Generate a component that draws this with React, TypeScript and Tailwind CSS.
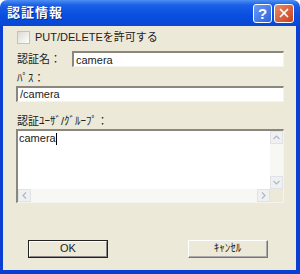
import { X } from "lucide-react"

const font = { fontFamily: '"Liberation Sans", "Noto Sans CJK JP", sans-serif' }

function Sunken({ className, children }: { className?: string; children?: React.ReactNode }) {
  return (
    <div className={`border-t-2 border-l-2 border-t-[#8a887e] border-l-[#8a887e] border-r border-b border-r-[#f4f3ee] border-b-[#f4f3ee] bg-white ${className ?? ""}`}>
      {children}
    </div>
  )
}

function ScrollBtn({ dir }: { dir: "up" | "down" | "left" | "right" }) {
  const rot = { up: "rotate(0)", down: "rotate(180deg)", left: "rotate(-90deg)", right: "rotate(90deg)" }[dir]
  return (
    <div className="w-[13px] h-[13px] bg-[#eef0f2] border border-[#dfe3e8] flex items-center justify-center">
      <svg width="7" height="5" viewBox="0 0 7 5" style={{ transform: rot }}>
        <path d="M0.5 4 L3.5 1 L6.5 4" stroke="#b3b8c2" strokeWidth="1.2" fill="none" />
      </svg>
    </div>
  )
}

function Btn({ label, def }: { label: string; def?: boolean }) {
  return (
    <div
      className={`w-[80px] h-[18px] flex items-center justify-center text-[11px] text-[#222] bg-[#ece9d8] border ${
        def ? "border-[#222]" : "border-t-white border-l-white border-r-[#777] border-b-[#777]"
      }`}
    >
      <div className={`w-full h-full flex items-center justify-center ${def ? "border border-t-white border-l-white border-r-[#888] border-b-[#888]" : "border-r border-b border-r-[#aaa] border-b-[#aaa]"}`}>
        {label}
      </div>
    </div>
  )
}

export default function App() {
  return (
    <div className="w-[300px] h-[274px] flex flex-col bg-white" style={font}>
      {/* title bar */}
      <div className="h-[26px] rounded-t-[7px] bg-[linear-gradient(#4d8ef4_0%,#1a5fe6_20%,#0a4ee0_60%,#0747d2_100%)] flex items-center pl-[7px] pr-[6px]">
        <span className="text-white font-bold text-[13px] tracking-[1px] [text-shadow:1px_1px_0_#0a2a8a]">認証情報</span>
        <div className="ml-auto flex gap-[2px]">
          <div className="w-[19px] h-[19px] rounded-[3px] border border-white bg-[linear-gradient(135deg,#6c9cf5,#2a63e0)] flex items-center justify-center text-white font-bold text-[15px] leading-none">
            ?
          </div>
          <div className="w-[20px] h-[19px] rounded-[3px] border border-white bg-[linear-gradient(135deg,#e98a6a,#c8401c)] flex items-center justify-center">
            <X size={14} color="white" strokeWidth={3} />
          </div>
        </div>
      </div>
      {/* body */}
      <div className="flex-1 bg-[#ece9d8] border-l-[3px] border-r-[4px] border-b-[4px] border-[#0b3fd3] flex flex-col pl-[13px] pr-[12px] text-[11px] text-[#222]">
        <div className="flex items-center gap-[5px] mt-[5px] ml-[1px] h-[13px]">
          <div className="w-[13px] h-[13px] border border-[#c5c3b8] bg-[linear-gradient(135deg,#dcdad0,#ffffff)]" />
          <span>PUT/DELETEを許可する</span>
        </div>
        <div className="flex items-center mt-[7px]">
          <span className="w-[56px] pl-[1px]">認証名：</span>
          <Sunken className="flex-1 h-[16px] flex items-center pl-[2px]">camera</Sunken>
        </div>
        <div className="mt-[2px] ml-[1px] leading-[16px]">ﾊﾟｽ：</div>
        <Sunken className="h-[16px] flex items-center pl-[2px]">/camera</Sunken>
        <div className="mt-[11px] ml-[1px] leading-[16px]">認証ﾕｰｻﾞ/ｸﾞﾙｰﾌﾟ：</div>
        <Sunken className="h-[74px] flex">
          <div className="flex-1 flex flex-col">
            <div className="flex-1 pl-[1px] leading-[14px]">
              camera<span className="inline-block w-[1px] h-[12px] bg-black align-middle" />
            </div>
            <div className="h-[13px] flex items-center bg-[#f7f7f4]">
              <ScrollBtn dir="left" />
              <div className="flex-1" />
              <ScrollBtn dir="right" />
            </div>
          </div>
          <div className="w-[13px] flex flex-col bg-[#f7f7f4]">
            <ScrollBtn dir="up" />
            <div className="flex-1" />
            <ScrollBtn dir="down" />
            <div className="h-[13px] bg-[#ece9d8]" />
          </div>
        </Sunken>
        <div className="flex justify-between mt-[37px] pl-[12px] pr-[16px]">
          <Btn label="OK" def />
          <Btn label="ｷｬﾝｾﾙ" />
        </div>
      </div>
    </div>
  )
}
